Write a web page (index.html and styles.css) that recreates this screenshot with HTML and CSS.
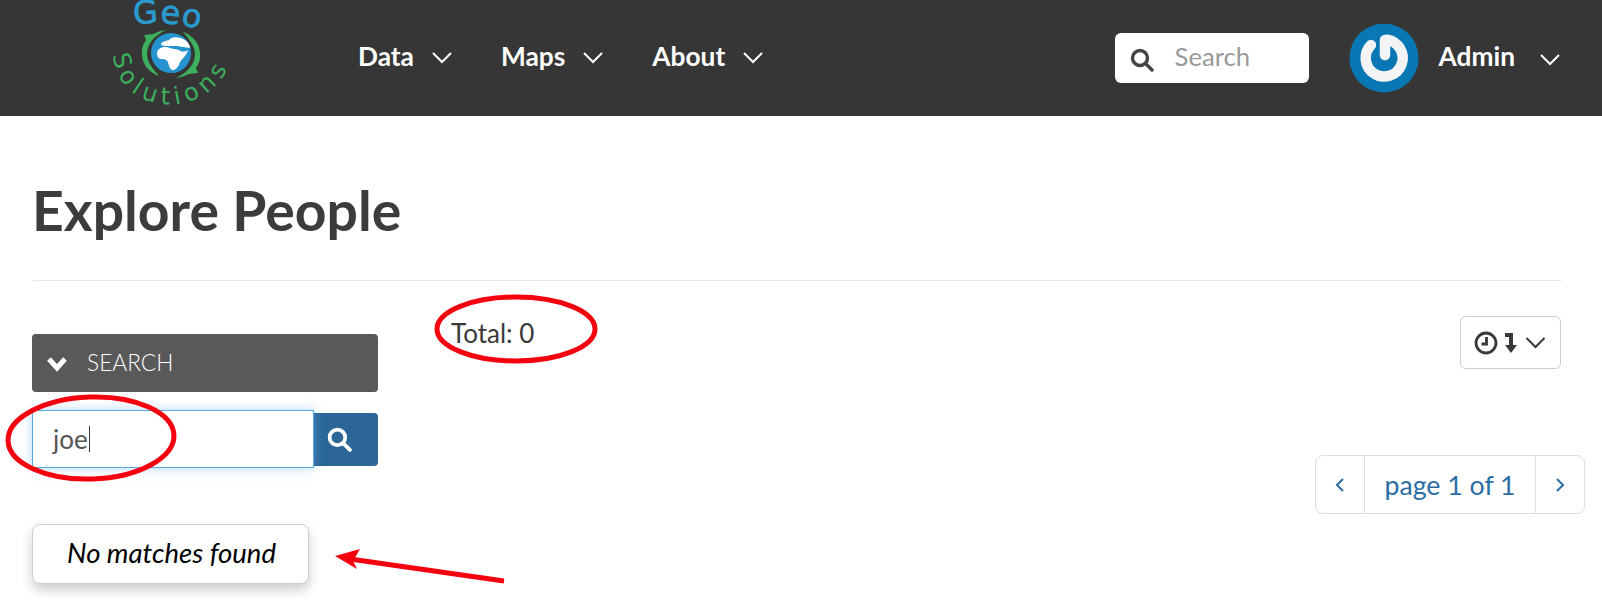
FILE: index.html
```html
<!DOCTYPE html>
<html lang="en">
<head>
    <meta charset="UTF-8">
    <title>Explore People</title>
    <link rel="stylesheet" href="styles.css">
</head>

<body>
    <!-- top bar -->
    <header class="navbar">
        <a class="logo" href="#">
            <svg width="140" height="116" viewBox="0 0 140 116">
                <defs>
                    <path id="geo-curve" d="M34 25 Q68 19 110 32"/>
                    <path id="sol-curve" d="M13 55 C19 122 122 122 134 48"/>
                </defs>
                <text class="logo-geo"><textPath href="#geo-curve">Geo</textPath></text>
                <g class="logo-swirl">
                    <path d="M66 30 C50 32 41 42 42 54 C42 65 50 73 59 76 C53 69 47 62 47 54 C47 44 54 36 66 30 Z"/>
                    <path d="M44 35 L54 34 L48 45 Z"/>
                </g>
                <g class="logo-swirl" transform="rotate(180 71 54)">
                    <path d="M66 30 C50 32 41 42 42 54 C42 65 50 73 59 76 C53 69 47 62 47 54 C47 44 54 36 66 30 Z"/>
                    <path d="M44 35 L54 34 L48 45 Z"/>
                </g>
                <circle class="logo-globe" cx="71" cy="53" r="20"/>
                <path class="logo-land" d="M57 54 C57 49 61 47 65 47 C69 47 71 49 75 49 L79 50 C81 52 85 52 88 50 C87 55 82 59 80 62 C79 65 78 68 74 70 C70 71 69 66 68 62 C66 59 64 59 61 59 C59 59 57 57 57 54 Z"/>
                <path class="logo-land" d="M61 45 C61 42 65 41 69 40 C71 37 78 36 85 40 C89 43 90 46 90 48 C85 47 81 47 77 46 C73 46 69 46 65 46 Z"/>
                <text class="logo-sol"><textPath href="#sol-curve">Solutions</textPath></text>
            </svg>
        </a>
        <nav class="nav-links">
            <a href="#">Data <svg class="chev" viewBox="0 0 20 12"><polyline points="1,1 10,10 19,1"/></svg></a>
            <a href="#">Maps <svg class="chev" viewBox="0 0 20 12"><polyline points="1,1 10,10 19,1"/></svg></a>
            <a href="#">About <svg class="chev" viewBox="0 0 20 12"><polyline points="1,1 10,10 19,1"/></svg></a>
        </nav>
        <div class="nav-search">
            <svg class="icon-search" viewBox="0 0 24 24"><circle cx="10" cy="10" r="7.5"/><line x1="15.5" y1="15.5" x2="22" y2="22"/></svg>
            <span>Search</span>
        </div>
        <div class="user-menu">
            <svg class="avatar" viewBox="0 0 70 70">
                <circle cx="35" cy="35" r="34.5" fill="#0a77b5"/>
                <g class="avatar-mark">
                    <path d="M22 22 A18.5 18.5 0 1 0 38 16.7"/>
                    <line x1="36" y1="17" x2="36" y2="32"/>
                </g>
            </svg>
            <span class="user-name">Admin</span>
            <svg class="chev" viewBox="0 0 20 12"><polyline points="1,1 10,10 19,1"/></svg>
        </div>
    </header>

    <main class="content">
        <h1>Explore People</h1>
        <hr class="divider">

        <div class="columns">
            <!-- filters -->
            <aside class="sidebar">
                <div class="search-head">
                    <svg class="head-chev" viewBox="0 0 22 16"><polyline points="3,3 11,12 19,3"/></svg>
                    <span>SEARCH</span>
                </div>
                <div class="search-row">
                    <div class="search-input">joe<span class="caret"></span></div>
                    <button class="search-btn">
                        <svg class="icon-search" viewBox="0 0 24 24"><circle cx="10" cy="10" r="7.5"/><line x1="15.5" y1="15.5" x2="22" y2="22"/></svg>
                    </button>
                </div>
                <div class="no-match">No matches found</div>
            </aside>

            <section class="results">
                <div class="results-top">
                    <div class="total">Total: 0</div>
                    <button class="sort-btn">
                        <svg class="icon-clock" viewBox="0 0 24 24"><circle cx="12" cy="12" r="10"/><polyline points="12.5,6 12.5,13 7.5,13"/></svg>
                        <svg class="icon-sort" viewBox="0 0 14 24"><path d="M1 2H9V14H13L7 22L1 14H5V6H1Z"/></svg>
                        <svg class="chev chev-dark" viewBox="0 0 20 12"><polyline points="1,1 10,10 19,1"/></svg>
                    </button>
                </div>
                <div class="pager">
                    <a href="#" class="pager-arrow"><svg viewBox="0 0 10 16"><polyline points="8,2 2,8 8,14"/></svg></a>
                    <a href="#" class="pager-label">page 1 of 1</a>
                    <a href="#" class="pager-arrow"><svg viewBox="0 0 10 16"><polyline points="2,2 8,8 2,14"/></svg></a>
                </div>
            </section>
        </div>
    </main>

    <!-- red marks drawn over the screenshot -->
    <svg class="marks" width="1602" height="608" viewBox="0 0 1602 608">
        <ellipse cx="91" cy="438" rx="83" ry="41" transform="rotate(-2 91 438)"/>
        <ellipse cx="516" cy="329" rx="79" ry="32"/>
        <line x1="504" y1="581" x2="350" y2="559"/>
        <path class="arrow-head" d="M335 556 L360 549 L353 561 L357 569 Z"/>
    </svg>
</body>
</html>
```

FILE: styles.css
```css
* {
    box-sizing: border-box;
}

html, body {
    height: 100%;
}

body {
    margin: 0;
    position: relative;
    overflow: hidden;
    font-family: Lato, "Open Sans", sans-serif;
    color: #393939;
    background: #fff;
}

a {
    color: inherit;
    text-decoration: none;
}

/* navbar */
.navbar {
    height: 116px;
    background: #363636;
    display: flex;
    align-items: center;
    color: #fff;
    padding: 0 42px 0 100px;
    overflow: hidden;
}

.logo {
    display: flex;
    width: 258px;
    height: 116px;
}

.logo-geo {
    font-family: "DejaVu Sans", sans-serif;
    font-size: 32px;
    fill: #2a9bd0;
    stroke: #2a9bd0;
    stroke-width: 0.7;
    letter-spacing: 1px;
}

.logo-sol {
    font-family: "DejaVu Sans", sans-serif;
    font-size: 24px;
    fill: #3cb05c;
    letter-spacing: 5.5px;
}

.logo-swirl {
    fill: #3cb05c;
}

.logo-globe {
    fill: #2493cf;
}

.logo-land {
    fill: #fff;
}

.nav-links {
    display: flex;
    gap: 49px;
    font-size: 26.3px;
    font-weight: 700;
    flex: 1;
    padding-bottom: 4px;
}

.nav-links a {
    display: flex;
    align-items: center;
    gap: 18px;
}

.chev {
    width: 20px;
    height: 12px;
    fill: none;
    stroke: #fff;
    stroke-width: 2;
    margin-top: 4px;
}

.nav-search {
    width: 194px;
    height: 50px;
    background: #fff;
    border-radius: 6px;
    display: flex;
    align-items: center;
    gap: 21px;
    padding-left: 15px;
    font-size: 25.7px;
    color: #999;
}

.nav-search span {
    padding-bottom: 4px;
}

.nav-search .icon-search {
    margin-top: 4px;
}

.icon-search {
    width: 24px;
    height: 24px;
    fill: none;
    stroke: #444;
    stroke-width: 3.4;
    stroke-linecap: round;
}

.user-menu {
    display: flex;
    align-items: center;
    margin-left: 40px;
}

.avatar {
    width: 70px;
    height: 70px;
}

.avatar-mark {
    fill: none;
    stroke: #f2f4f6;
    stroke-width: 10.5;
    stroke-linecap: round;
    filter: blur(0.6px);
}

.user-name {
    font-size: 26.3px;
    font-weight: 700;
    margin: 0 25px 0 20px;
    padding-bottom: 4px;
}

/* page */
.content {
    padding: 0 17px 0 32px;
}

h1 {
    margin: 0;
    padding-top: 60px;
    font-size: 55.3px;
    font-weight: 700;
    line-height: 68px;
    color: #3c3c3c;
}

.divider {
    border: 0;
    border-top: 1px solid #e8e8e8;
    margin: 36px 24px 0 1px;
}

.columns {
    display: flex;
    gap: 73px;
    margin-top: 53px;
}

.sidebar {
    width: 346px;
    flex-shrink: 0;
}

.search-head {
    height: 58px;
    background: #595959;
    border-radius: 4px;
    display: flex;
    align-items: center;
    gap: 19px;
    padding: 0 0 2px 14px;
    color: #fff;
    font-size: 22.7px;
    font-weight: 300;
}

.head-chev {
    width: 22px;
    height: 16px;
    fill: none;
    stroke: #fff;
    stroke-width: 5;
    margin-top: 3px;
}

.search-row {
    display: flex;
    align-items: center;
    margin-top: 18px;
}

.search-input {
    width: 282px;
    height: 58px;
    border: 1px solid #5aa9e6;
    box-shadow: 0 0 10px rgba(102, 175, 233, 0.5);
    display: flex;
    align-items: center;
    padding-left: 20px;
    font-size: 26px;
    color: #555;
    position: relative;
    background: #fff;
}

.caret {
    display: inline-block;
    width: 1px;
    height: 26px;
    background: #333;
    margin-left: 1px;
}

.search-btn {
    width: 64px;
    height: 53px;
    background: #2c6698;
    border: 0;
    border-radius: 0 4px 4px 0;
    padding: 0 0 0 13px;
    display: flex;
    align-items: center;
    justify-content: flex-start;
}

.search-btn .icon-search {
    width: 25px;
    height: 25px;
    stroke: #fff;
    stroke-width: 3.6;
}

.no-match {
    width: 277px;
    height: 60px;
    margin-top: 56px;
    border: 1px solid #ccc;
    border-radius: 8px;
    box-shadow: 0 6px 12px rgba(0, 0, 0, 0.2);
    display: flex;
    align-items: center;
    justify-content: center;
    padding: 0 0 4px 2px;
    font-size: 27.5px;
    font-style: italic;
    color: #000;
    background: #fff;
}

.results {
    flex: 1;
}

.results-top {
    display: flex;
    justify-content: space-between;
    align-items: flex-start;
    padding-right: 24px;
    margin-top: -18px;
}

.total {
    font-size: 26px;
    line-height: 30px;
    margin-top: 2px;
}

.sort-btn {
    width: 101px;
    height: 53px;
    background: #fff;
    border: 1px solid #ccc;
    border-radius: 6px;
    display: flex;
    align-items: center;
    justify-content: center;
    gap: 6px;
    padding: 0 2px 0 0;
}

.icon-clock {
    width: 24px;
    height: 24px;
    fill: none;
    stroke: #393939;
    stroke-width: 2.8;
}

.icon-sort {
    width: 14px;
    height: 24px;
    fill: #393939;
}

.chev-dark {
    width: 21px;
    stroke: #393939;
    margin: 0 0 0 1px;
}

.pager {
    display: flex;
    width: 270px;
    height: 59px;
    margin: 86px 0 0 auto;
    border: 1px solid #ddd;
    border-radius: 8px;
    color: #2c6da4;
    font-size: 26.7px;
}

.pager-arrow {
    width: 48px;
    display: flex;
    align-items: center;
    justify-content: center;
}

.pager-arrow svg {
    width: 10px;
    height: 16px;
    fill: none;
    stroke: #2c6da4;
    stroke-width: 2;
}

.pager-label {
    flex: 1;
    display: flex;
    align-items: center;
    justify-content: center;
    border-left: 1px solid #ddd;
    border-right: 1px solid #ddd;
}

/* annotations */
.marks {
    position: absolute;
    top: 0;
    left: 0;
    fill: none;
    stroke: #f5000f;
    stroke-width: 5;
    pointer-events: none;
}

.arrow-head {
    fill: #f5000f;
    stroke: none;
}
```
